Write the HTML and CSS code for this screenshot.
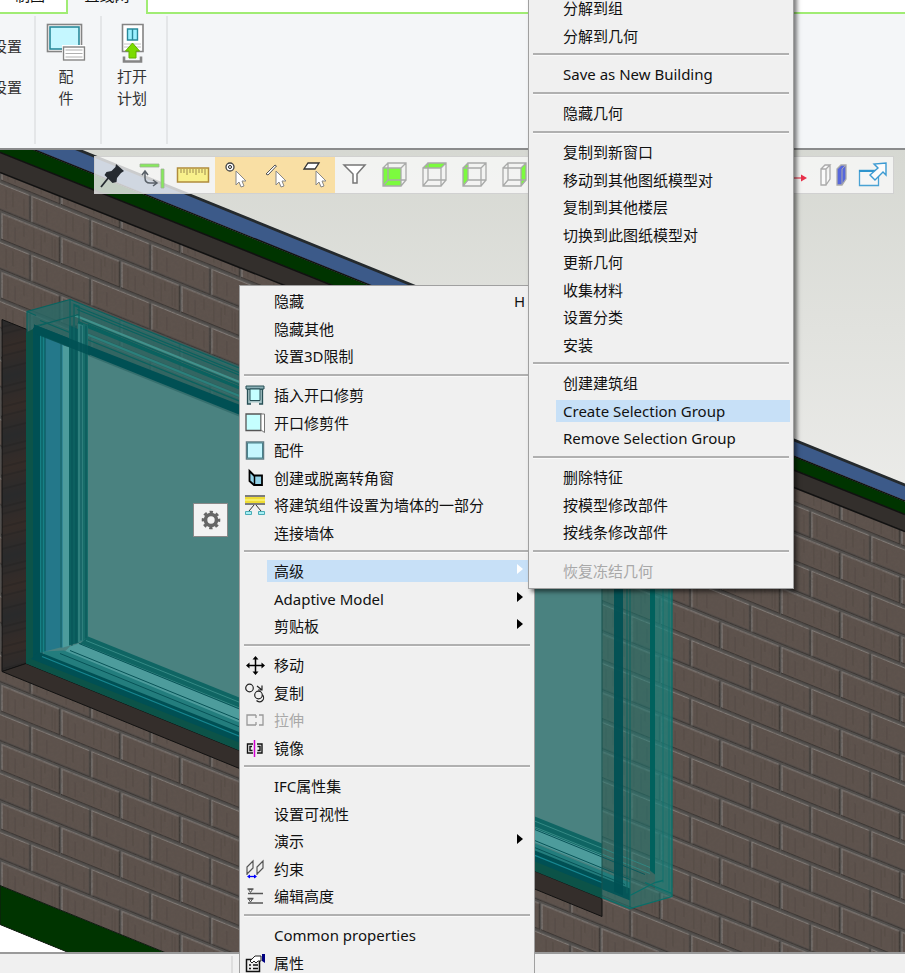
FILE: index.html
```html
<!DOCTYPE html>
<html lang="zh-CN">
<head>
<meta charset="utf-8">
<title>建筑模型</title>
<link rel="stylesheet" href="styles.css">
</head>
<body>
<div class="app">
  <nav class="tabs">
    <button class="tab tab-first">制图</button>
    <button class="tab tab-active">直线网</button>
    <span class="tab-rest"></span>
  </nav>
  <header class="ribbon">
    <div class="ribbon-group ribbon-links">
      <button class="text-tool">设置</button>
      <button class="text-tool">设置</button>
    </div>
    <div class="ribbon-group">
      <button class="tool">
        <svg width="40" height="40" viewBox="0 0 40 40"><rect x="1.500" y="1.500" width="34" height="27" fill="#fff" stroke="#848484" stroke-width="1.600"/><rect x="4" y="4" width="29" height="22" fill="#c5f7ff" stroke="#28899a" stroke-width="1.600"/><rect x="16" y="22" width="24" height="16" fill="#fff"/><rect x="17.500" y="24" width="21" height="13" fill="#fff" stroke="#848484" stroke-width="1.400"/><path d="M19.500 27h17M19.500 30.500h17M19.500 34h17" stroke="#b0b0b0"/></svg>
        <span>配<br>件</span>
      </button>
    </div>
    <div class="ribbon-group">
      <button class="tool">
        <svg width="40" height="40" viewBox="0 0 40 40"><path d="M10.500 28.500v-27h20.500v27z" fill="#fff" stroke="#848484" stroke-width="1.600"/><path d="M15.500 6h10v11h-10zM20.500 6v11" fill="#9cf1ff" stroke="#28899a" stroke-width="1.400"/><path d="M12 21h17M12 24h17" stroke="#c4c4c4"/><path d="M12 33.500v5h17v-5" fill="none" stroke="#848484" stroke-width="2.600"/><path d="M20.500 20l7 8h-3.500v7h-7v-7h-3.500z" fill="#7bdc00" stroke="#62b000"/></svg>
        <span>打开<br>计划</span>
      </button>
    </div>
  </header>

  <main class="viewport">
    <svg class="scene" viewBox="0 149 905 803" preserveAspectRatio="xMidYMid slice">
      <defs>
        <linearGradient id="sky" x1="0" y1="0" x2="0" y2="1"><stop offset="0" stop-color="#d6d8d2"/><stop offset=".45" stop-color="#ececea"/><stop offset="1" stop-color="#fff"/></linearGradient>
        <linearGradient id="wood" x1="0" y1="0" x2="0" y2="1"><stop offset="0" stop-color="#292a2b"/><stop offset=".5" stop-color="#352c28"/><stop offset="1" stop-color="#292a2b"/></linearGradient>
        <pattern id="grain" width="30" height="60" patternUnits="userSpaceOnUse" patternTransform="matrix(1 -.25 0 1 0 318)"><rect width="30" height="60" fill="url(#wood)"/><path d="M0 9h30M0 16h30M0 29h30M0 38h30M0 51h30" stroke="#1c1b1b" opacity=".6"/></pattern>
        <pattern id="brick" width="60" height="59" patternUnits="userSpaceOnUse" patternTransform="matrix(1 .405 0 1 1 743)">
          <rect width="60" height="59" fill="#52504e"/>
          <path d="M1 1h57v25h-57zM31 30.500h29v25h-29zM0 30.500h28v25h-28z" fill="#5e534d"/>
          <path d="M1 26V.800h57M31 56V30.300h29M0 30.300h28" fill="none" stroke="#817b77" stroke-width="1.200"/>
          <path d="M0 26.700h58.500V1M29 31v26M31 56.300h29M0 56.300h29" fill="none" stroke="#3c3734" stroke-width="1.200"/>
          <path d="M7 4v20M14 9v15M23 4v11M33 3v20M40 6v18M44 3v9M51 4v20M54 5v19M36 33v20M46 37v14M5 34v19M12 34v15M23 36v17" stroke="#484039" opacity=".5"/>
        </pattern>
        <filter id="rough" x="0" y="0" width="100%" height="100%"><feTurbulence type="fractalNoise" baseFrequency=".35" numOctaves="2" seed="4"/><feColorMatrix values="0 0 0 0 .1  0 0 0 0 .08  0 0 0 0 .07  1.800 0 0 0 -.72"/></filter>
        <clipPath id="wallclip"><path d="M0 172L905 531V952H165L0 885z"/></clipPath>
      </defs>
      <rect y="149" width="905" height="803" fill="url(#sky)"/>
      <path d="M0 172L905 531V952H165L0 885z" fill="url(#brick)"/>
      <rect y="149" width="905" height="803" filter="url(#rough)" clip-path="url(#wallclip)" opacity=".5"/>
      <path d="M0 116L905 483V487L0 120z" fill="#252a2d"/>
      <path d="M0 119L905 486V500L0 135z" fill="#3c5a89"/>
      <path d="M0 136L905 501V514L0 152z" fill="#003400"/>
      <path d="M0 152L905 514V531L0 172z" fill="#332f2c"/>
      <path d="M0 135.500L905 500.500M0 152L905 514M0 172L905 531" stroke="#111" stroke-width="1.600"/>
      <path d="M0 885L165 952H68L0 924z" fill="#003400" stroke="#101810"/>
      <path d="M0 925L67 952H0z" fill="#fff"/>

      <path d="M2 319L27 329V663L2 671z" fill="url(#grain)" stroke="#111"/>
      <path d="M2 671L26 663L602 898V916z" fill="#342e2b" stroke="#111"/>

      <path d="M27 311L70 299L672 543V896L630 908L27 663z" fill="#1c827c" fill-opacity=".42"/>
      <path d="M34 330L602 560V890L34 657z" fill="#4a8280"/>
      <path d="M27 311L70 299L239 365L602 511V565L239 416L30 332z" fill="#2b6664" fill-opacity=".65"/>
      <path d="M34 324L239 404L602 551V564L239 414L34 332z" fill="#005054"/>
      <g stroke="#0a625f" stroke-width="1.200" fill="none">
        <path d="M70 299L672 543M74 305L672 548M77 309L650 541M82 320L602 532M88 324L602 537M40 320L602 547"/>
        <path d="M75 315L602 528" stroke="#41918b" stroke-width="2"/>
        <path d="M85 333L602 542" stroke="#2b807c" stroke-width="2"/>
        <path d="M78 322L602 534" stroke-width="3"/>
        <path d="M27 663V311L70 299V336M27 311L36 315M40 325L78 314M74 338V304L79 306V338M34 326L79 314"/>
      </g>

      <path d="M26 332L34 328V657L26 663z" fill="#0c5348"/>
      <path d="M33 327L40 330V655L33 658z" fill="#005054"/>
      <path d="M40 334L45 337V652H40z" fill="#168085"/>
      <path d="M45 337L60 343V647L45 651z" fill="#24788a"/>
      <path d="M60 343L64 345V647H60z" fill="#348895"/>
      <path d="M63 345L70 347V645L63 647z" fill="#4d9c9c"/>
      <path d="M69 325L79 329V642L69 645z" fill="#0c6060"/>
      <path d="M78 323L84 325V640L78 642z" fill="#2f7f7d"/>
      <path d="M83 323L88 325V637L83 640z" fill="#176c69"/>
      <path d="M42 334V653M45 336V651M61 343V647M72 325V646M76 325V643M81 325V640M86 325V638" stroke="#075357" fill="none"/>
      <path d="M34 324L90 346V355L34 333z" fill="#005054" fill-opacity=".85"/>

      <path d="M88 636L602 843V857L79 644z" fill="#0f6563"/>
      <path d="M79 643L602 855V869L64 652L70 646z" fill="#4d9c9c"/>
      <path d="M44 651L64 650L630 882V888L44 656z" fill="#237d7d"/>
      <path d="M38 651L630 888V900L30 660z" fill="#005054"/>
      <path d="M30 658L602 888V898L26 663z" fill="#0c5348"/>
      <path d="M86 640L650 867M82 644L650 873" stroke="#358a85" fill="none"/>
      <path d="M70 650L630 879M60 653L625 884M79 643L645 874" stroke="#075357" fill="none"/>
      <path d="M42 656L602 882" stroke="#168690" stroke-width="1.300"/>

      <path d="M602 565L672 593V896L630 908L602 898z" fill="#1c7770" fill-opacity=".16"/>
      <path d="M602 560V898" stroke="#17524f"/>
      <path d="M614 560H623V895L614 891z" fill="#005054" fill-opacity=".92"/>
      <path d="M630 560V907M627 560V893M663 560V882M669 560V890" stroke="#0a625f" fill="none"/>
      <path d="M650 550H655V874L650 870z" fill="#00615d"/>
      <path d="M655 550H672V896L655 889z" fill="#1a8781" fill-opacity=".4"/>
      <path d="M672 545V896L630 908L602 897M630 895L655 882L663 880M672 893L645 882" fill="none" stroke="#08706a" stroke-width="1.300"/>
    </svg>

    <div class="toolbar">
      <button class="tb pin" aria-label="固定"><svg width="28" height="28" viewBox="0 0 28 28"><path d="M2 26L10 16" stroke="#252a30" stroke-width="1.800"/><path d="M17 3l8 7-3 2-4 5-.500 4-4 1-8-8 2-3 5-1 4-4z" fill="#252a30"/></svg></button>
      <button class="tb" aria-label="方向"><svg width="28" height="28" viewBox="0 0 28 28"><path d="M3 3h19v3h-19zM24 8h3v19h-3z" fill="#86ea5b" stroke="#a0b098" stroke-width=".8"/><path d="M8 11v6q0 5 5 5h6M5 14l3-4 3 4M16 19l4 3-4 3" fill="none" stroke="#596068" stroke-width="1.500"/></svg></button>
      <button class="tb ruler" aria-label="测量"><svg width="34" height="28" viewBox="0 0 34 28"><rect x="1.500" y="7" width="31" height="14" fill="#f8f08c" stroke="#b08c3c" stroke-width="1.500"/><path d="M5 8v4M8 8v4M11 8v6M14 8v4M17 8v4M20 8v6M23 8v4M26 8v4M29 8v6" stroke="#9c8a50"/></svg></button>
      <span class="picked">
        <button class="tb" aria-label="选择点"><svg width="28" height="28" viewBox="0 0 28 28"><circle cx="9" cy="6" r="4" fill="#fff" stroke="#444" stroke-width="1.300"/><circle cx="9" cy="6" r="1.500" fill="#fff" stroke="#222"/><path d="M15 10v14l3-3 2 5 3-1-2-5h4z" fill="#fff" stroke="#888"/></svg></button>
        <button class="tb" aria-label="选择线"><svg width="28" height="28" viewBox="0 0 28 28"><path d="M5 13L14 4l1.500 1L7 14z" fill="#fff" stroke="#555"/><path d="M15 10v14l3-3 2 5 3-1-2-5h4z" fill="#fff" stroke="#888"/></svg></button>
        <button class="tb" aria-label="选择面"><svg width="28" height="28" viewBox="0 0 28 28"><path d="M7 2h11l-4 6H3z" fill="#fff" stroke="#333" stroke-width="1.300"/><path d="M15 10v14l3-3 2 5 3-1-2-5h4z" fill="#fff" stroke="#888"/></svg></button>
      </span>
      <button class="tb" aria-label="过滤"><svg width="28" height="28" viewBox="0 0 28 28"><path d="M3 4h21l-8 9v9h-4v-9z" fill="#fff" stroke="#777" stroke-width="1.500"/></svg></button>
      <button class="tb" aria-label="前视"><svg width="28" height="28" viewBox="0 0 28 28"><path d="M2 7h18v18H2z" fill="#7cfb3e"/><path d="M2 7h18v18H2zM7 2h18v17H7zM2 7l5-5M20 7l5-5M20 25l5-6M2 25l5-6" fill="none" stroke="#a9aaa9" stroke-width="1.300"/></svg></button>
      <button class="tb" aria-label="顶视"><svg width="28" height="28" viewBox="0 0 28 28"><path d="M2 7l5-5h18l-5 5z" fill="#7cfb3e"/><path d="M2 7h18v18H2zM7 2h18v17H7zM2 7l5-5M20 7l5-5M20 25l5-6M2 25l5-6" fill="none" stroke="#a9aaa9" stroke-width="1.300"/></svg></button>
      <button class="tb" aria-label="左视"><svg width="28" height="28" viewBox="0 0 28 28"><path d="M2 7l5-5v17l-5 6z" fill="#7cfb3e"/><path d="M2 7h18v18H2zM7 2h18v17H7zM2 7l5-5M20 7l5-5M20 25l5-6M2 25l5-6" fill="none" stroke="#a9aaa9" stroke-width="1.300"/></svg></button>
      <button class="tb" aria-label="右视"><svg width="28" height="28" viewBox="0 0 28 28"><path d="M20 7l5-5v17l-5 6z" fill="#7cfb3e"/><path d="M2 7h18v18H2zM7 2h18v17H7zM2 7l5-5M20 7l5-5M20 25l5-6M2 25l5-6" fill="none" stroke="#a9aaa9" stroke-width="1.300"/></svg></button>
      <span class="grow"></span>
      <button class="tb" aria-label="轴"><svg width="28" height="28" viewBox="0 0 28 28"><path d="M0 17h23" stroke="#e8485a" stroke-width="1.300"/><path d="M20 13.500l6 3.500-6 3.500z" fill="#e8304a"/></svg></button>
      <button class="tb pair" aria-label="墙体"><svg width="28" height="28" viewBox="0 0 28 28"><path d="M1 8v16h5V8zM1 8l4-4h5L6 8M10 4v14l-4 6" fill="#fafafa" stroke="#aaa" stroke-width="1.300"/><path d="M17 8l4-4h5v14l-4 6h-5z" fill="#5667dc" stroke="#aaa" stroke-width="1.300"/><path d="M22 24V8l4-4" fill="none" stroke="#aaa"/></svg></button>
      <button class="tb" aria-label="新窗口"><svg width="30" height="28" viewBox="0 0 30 28"><path d="M1.500 9.500h19v15h-19z" fill="#f6f6f6" stroke="#4aa2d4" stroke-width="1.300"/><path d="M1 10h20" stroke="#3095ce" stroke-width="2"/><path d="M28 2v12l-3-3-8 8-5-5 8-7-4-4z" fill="#fbfbfb" stroke="#3b9ad2" stroke-width="1.400"/></svg></button>
    </div>

    <button class="gear" aria-label="设置"><svg width="22" height="22" viewBox="0 0 22 22"><circle cx="11" cy="11" r="5.500" fill="none" stroke="#666" stroke-width="3.600"/><circle cx="11" cy="11" r="8" fill="none" stroke="#666" stroke-width="2.600" stroke-dasharray="3.300 2.983" stroke-dashoffset="1.600"/></svg></button>
  </main>
  <footer class="status"><span></span></footer>
</div>

<div class="menu main-menu" role="menu">
  <ul>
    <li><button><span class="ico"></span><span class="label">隐藏</span><kbd>H</kbd></button></li>
    <li><button><span class="ico"></span><span class="label">隐藏其他</span></button></li>
    <li><button><span class="ico"></span><span class="label">设置3D限制</span></button></li>
  </ul>
  <ul>
    <li><button><span class="ico"><svg viewBox="0 0 20 20"><path d="M2.500 4h15v15h-15z" fill="#a5c3c6" stroke="#274f55" stroke-width="1.300"/><path d="M1 1h18v3H1z" fill="#8bb0b6" stroke="#274f55"/><path d="M5 4h10v11.500H5z" fill="#c5ffff" stroke="#274f55"/><path d="M6 17.500h8V20H6z" fill="#f0f0f0"/></svg></span><span class="label">插入开口修剪</span></button></li>
    <li><button><span class="ico"><svg viewBox="0 0 20 20"><path d="M1 1h15v16.500H1z" fill="#c5ffff" stroke="#555" stroke-width="1.300"/><path d="M16 1h3.500v18.500L16 17z" fill="#fff" stroke="#777"/></svg></span><span class="label">开口修剪件</span></button></li>
    <li><button><span class="ico"><svg viewBox="0 0 20 20"><path d="M1.500 2h17v17h-17z" fill="#c5f7ff" stroke="#607c84" stroke-width="1.500"/><path d="M2.500 3h15v15h-15z" fill="none" stroke="#48818c"/></svg></span><span class="label">配件</span></button></li>
    <li><button><span class="ico"><svg viewBox="0 0 20 20"><path d="M4.500 3L9 7.500h8V17H9l-4.500-4z" fill="#94d3e8" stroke="#000" stroke-width="1.800"/><path d="M9.500 7v10" stroke="#000" stroke-width="1.500"/></svg></span><span class="label">创建或脱离转角窗</span></button></li>
    <li><button><span class="ico"><svg viewBox="0 0 20 20"><path d="M0 1h20M0 9h20" stroke="#555" stroke-width="1.500"/><path d="M0 2h20v6H0z" fill="#eedc35"/><path d="M0 5h20" stroke="#ffffa0"/><path d="M4 16l5-6M16 16l-5-6" stroke="#333"/><path d="M.5 16.500h6V19.500h-6zM13.500 16.500h6V19.500h-6z" fill="#a8f0f5" stroke="#4aabb5"/></svg></span><span class="label">将建筑组件设置为墙体的一部分</span></button></li>
    <li><button><span class="ico"></span><span class="label">连接墙体</span></button></li>
  </ul>
  <ul>
    <li><button class="lit open"><span class="ico"></span><span class="label">高级</span></button></li>
    <li><button class="sub"><span class="ico"></span><span class="label">Adaptive Model</span></button></li>
    <li><button class="sub"><span class="ico"></span><span class="label">剪贴板</span></button></li>
  </ul>
  <ul>
    <li><button><span class="ico"><svg viewBox="0 0 20 20"><path d="M10.500 3v15M3 10.500h15" stroke="#000" stroke-width="1.500"/><path d="M10.500 1l3 3.500h-6zM10.500 20l3-3.500h-6zM1 10.500l3.500-3v6zM20 10.500l-3.500-3v6z"/></svg></span><span class="label">移动</span></button></li>
    <li><button><span class="ico"><svg viewBox="0 0 20 20"><g fill="none" stroke="#222" stroke-width="1.200"><circle cx="4.500" cy="5" r="3.800"/><circle cx="13.500" cy="12" r="3.800"/><path d="M17.500 12a4 4 0 1 1-6 5.500M12 3l5 4M17 2.500V7h-4"/></g></svg></span><span class="label">复制</span></button></li>
    <li><button disabled><span class="ico"><svg viewBox="0 0 20 20"><path d="M11 5H2v10h9M11 5v3M11 12v3M14 5h4v10h-4" fill="none" stroke="#999" stroke-width="1.300"/></svg></span><span class="label">拉伸</span></button></li>
    <li><button><span class="ico"><svg viewBox="0 0 20 20"><path d="M8 6H2.500v9H8M7 8.500H5v4h2.500M12 6h5v9h-5M12.500 8.500H15v4h-2.500" fill="none" stroke="#111" stroke-width="1.400"/><path d="M9.500 2v17" stroke="#d000d0" stroke-width="1.500"/></svg></span><span class="label">镜像</span></button></li>
  </ul>
  <ul>
    <li><button><span class="ico"></span><span class="label">IFC属性集</span></button></li>
    <li><button><span class="ico"></span><span class="label">设置可视性</span></button></li>
    <li><button class="sub"><span class="ico"></span><span class="label">演示</span></button></li>
    <li><button><span class="ico"><svg viewBox="0 0 20 20"><path d="M2 16V8l6-6v7l-6 6M12 16V8l6-6v7l-6 6" fill="none" stroke="#555" stroke-width="1.200"/><path d="M3 17.500h8" stroke="#00f" stroke-width="1.300"/><path d="M2 17.500l3-2v4zM12 17.500l-3-2v4z" fill="#00f"/></svg></span><span class="label">约束</span></button></li>
    <li><button><span class="ico"><svg viewBox="0 0 20 20"><path d="M3 7.500h15M3 17h15M2.500 3h6M2.500 12.500h6" stroke="#555" stroke-width="1.300"/><path d="M3.500 3.500h4l-2 3zM3.500 13h4l-2 3z" fill="none" stroke="#555"/></svg></span><span class="label">编辑高度</span></button></li>
  </ul>
  <ul>
    <li><button><span class="ico"></span><span class="label">Common properties</span></button></li>
    <li><button><span class="ico"><svg viewBox="0 0 20 20"><path d="M1.500 6.500h13v12h-13z" fill="#eee" stroke="#111" stroke-width="1.500"/><path d="M4 12h2M8 12h5M4 15.500h2M8 15.500h5" stroke="#111" stroke-width="1.300"/><path d="M5 8l5-5 6 0v5l-3 0-2 2-2-2-2 2z" fill="#fff" stroke="#222"/><path d="M17 1h3v9l-3-2z" fill="#000080"/></svg></span><span class="label">属性</span></button></li>
  </ul>
</div>

<div class="menu sub-menu" role="menu">
  <ul>
    <li><button><span class="ico"></span><span class="label">分解到组</span></button></li>
    <li><button><span class="ico"></span><span class="label">分解到几何</span></button></li>
  </ul>
  <ul>
    <li><button><span class="ico"></span><span class="label">Save as New Building</span></button></li>
  </ul>
  <ul>
    <li><button><span class="ico"></span><span class="label">隐藏几何</span></button></li>
  </ul>
  <ul>
    <li><button><span class="ico"></span><span class="label">复制到新窗口</span></button></li>
    <li><button><span class="ico"></span><span class="label">移动到其他图纸模型对</span></button></li>
    <li><button><span class="ico"></span><span class="label">复制到其他楼层</span></button></li>
    <li><button><span class="ico"></span><span class="label">切换到此图纸模型对</span></button></li>
    <li><button><span class="ico"></span><span class="label">更新几何</span></button></li>
    <li><button><span class="ico"></span><span class="label">收集材料</span></button></li>
    <li><button><span class="ico"></span><span class="label">设置分类</span></button></li>
    <li><button><span class="ico"></span><span class="label">安装</span></button></li>
  </ul>
  <ul>
    <li><button><span class="ico"></span><span class="label">创建建筑组</span></button></li>
    <li><button class="lit"><span class="ico"></span><span class="label">Create Selection Group</span></button></li>
    <li><button><span class="ico"></span><span class="label">Remove Selection Group</span></button></li>
  </ul>
  <ul>
    <li><button><span class="ico"></span><span class="label">删除特征</span></button></li>
    <li><button><span class="ico"></span><span class="label">按模型修改部件</span></button></li>
    <li><button><span class="ico"></span><span class="label">按线条修改部件</span></button></li>
  </ul>
  <ul>
    <li><button disabled><span class="ico"></span><span class="label">恢复冻结几何</span></button></li>
  </ul>
</div>
</body>
</html>
```
FILE: styles.css
```css
* { box-sizing: border-box; }

body {
  margin: 0;
  height: 100vh;
  overflow: hidden;
  position: relative;
  font: 15px/22px "Noto Sans", "Noto Sans CJK SC", sans-serif;
  color: #111;
}

button {
  margin: 0;
  padding: 0;
  border: 0;
  background: none;
  font: inherit;
  color: inherit;
}

svg { display: block; }

.app {
  display: flex;
  flex-direction: column;
  height: 100%;
}

/* Tab strip, scrolled partly out of view */
.tabs {
  display: flex;
  height: 14px;
  overflow: hidden;
  background: #fff;
}
.tab {
  display: flex;
  align-items: flex-end;
  justify-content: center;
  padding-bottom: 6px;
  border-bottom: 2px solid #a0ec74;
}
.tab-first { width: 68px; padding-right: 6px; border-right: 2px solid #a0ec74; }
.tab-active { width: 78px; background: #f4f6f8; border-bottom-color: #f4f6f8; }
.tab-rest { flex: 1; border-left: 2px solid #a0ec74; border-bottom: 2px solid #a0ec74; }

/* Ribbon */
.ribbon {
  display: flex;
  height: 136px;
  padding: 2px 0 4px;
  background: #f4f6f8;
  border-bottom: 2px solid #8a8b8c;
}
.ribbon-group {
  width: 66px;
  border-right: 2px solid #e4e6e8;
  color: #333;
}
.ribbon-links {
  width: 36px;
  display: flex;
  flex-direction: column;
  align-items: flex-end;
  gap: 19px;
  padding: 19px 12px 0 0;
}
.text-tool { white-space: nowrap; }
.tool {
  display: flex;
  flex-direction: column;
  align-items: center;
  gap: 2px;
  width: 100%;
  padding: 7px 4px 0 0;
  line-height: 22px;
}

/* Model view */
.viewport {
  position: relative;
  flex: 1;
  min-height: 0;
  overflow: hidden;
}
.scene { width: 100%; height: 100%; }

.toolbar {
  position: absolute;
  top: 6px;
  left: 94px;
  right: 11px;
  height: 38px;
  display: flex;
  background: rgba(250, 250, 250, .78);
  border: 1px solid rgba(200, 200, 200, .8);
}
.tb {
  display: flex;
  align-items: center;
  justify-content: center;
  width: 40px;
}
.pin { width: 36px; }
.pair { width: 38px; }
.ruler { width: 44px; }
.picked { display: flex; background: #f9dfa4; }
.grow { flex: 1; }

.gear {
  position: absolute;
  top: 353px;
  left: 193px;
  display: grid;
  place-items: center;
  width: 35px;
  height: 34px;
  background: #f2f2f2;
  border: 1px solid #888;
}

.status {
  height: 21px;
  padding-top: 2px;
  background: #f0f0f0;
  border-top: 2px solid #9a9a9a;
}
.status span {
  display: block;
  width: 233px;
  height: 100%;
  border-right: 2px solid #ddd;
}

/* Context menus */
.menu {
  position: absolute;
  background: #f0f0f0;
  border: 1px solid #a0a0a0;
}
.main-menu { top: 285px; left: 239px; width: 296px; padding-top: 1px; }
.sub-menu {
  top: -9px;
  left: 528px;
  width: 266px;
  padding: 2px 0 3px;
  box-shadow: 3px 3px 4px rgba(0, 0, 0, .5);
}
.menu ul {
  margin: 0;
  padding: 0;
  list-style: none;
}
.menu ul + ul::before {
  content: "";
  display: block;
  height: 2px;
  margin: 4px 4px;
  background: #b0b0b0;
  border-bottom: 1px solid #fafafa;
}
.menu li { height: 28px; }
.menu li:nth-child(even) { height: 27px; }
.menu button {
  position: relative;
  display: flex;
  align-items: center;
  width: 100%;
  height: 100%;
  padding-right: 3px;
  text-align: left;
}
.menu button:disabled { color: #a8a8a8; }
.ico { width: 27px; padding-left: 5px; }
.ico svg { width: 20px; height: 20px; }
.label {
  flex: 1;
  height: 22px;
  padding-left: 7px;
  white-space: nowrap;
}
.menu kbd { padding-right: 6px; font: inherit; }
.lit .label { background: #c7e0f7; }
.sub::after, .open::after {
  content: "";
  position: absolute;
  right: 11px;
  top: 7px;
  border: 5px solid transparent;
  border-left: 6px solid #000;
  border-right: 0;
}
.open::after { border-left-color: #fff; }
```
